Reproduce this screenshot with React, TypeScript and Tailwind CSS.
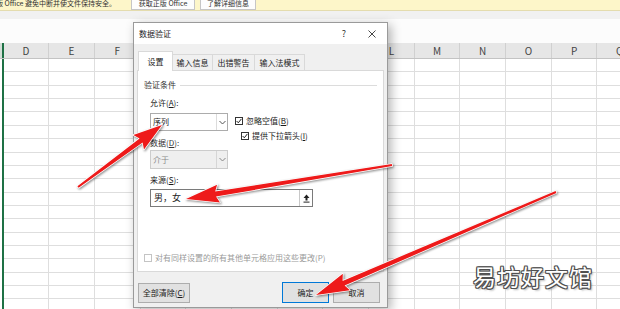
import React from "react";

const COLS = ["D", "E", "F", "G", "H", "I", "J", "K", "L", "M", "N", "O", "P", "Q"];
const ROWS = Array.from({ length: 19 }, (_, i) => i);

type Arrow = { x1: number; y1: number; x2: number; y2: number; w0: number; w1: number; hl: number; hw: number };

const ARROWS: Arrow[] = [
  { x1: 78, y1: 187, x2: 162, y2: 125, w0: 2, w1: 5, hl: 26, hw: 9 },
  { x1: 392, y1: 165, x2: 186, y2: 199, w0: 2, w1: 5, hl: 30, hw: 9 },
  { x1: 556, y1: 192, x2: 316, y2: 295, w0: 2, w1: 5, hl: 30, hw: 9 },
];

function arrowPoints(a: Arrow) {
  const dx = a.x2 - a.x1;
  const dy = a.y2 - a.y1;
  const len = Math.hypot(dx, dy);
  const ux = dx / len;
  const uy = dy / len;
  const nx = -uy;
  const ny = ux;
  const bx = a.x2 - ux * a.hl;
  const by = a.y2 - uy * a.hl;
  const pts = [
    [a.x1 + (nx * a.w0) / 2, a.y1 + (ny * a.w0) / 2],
    [bx + (nx * a.w1) / 2, by + (ny * a.w1) / 2],
    [bx - ux * 3 + nx * a.hw, by - uy * 3 + ny * a.hw],
    [a.x2, a.y2],
    [bx - ux * 3 - nx * a.hw, by - uy * 3 - ny * a.hw],
    [bx - (nx * a.w1) / 2, by - (ny * a.w1) / 2],
    [a.x1 - (nx * a.w0) / 2, a.y1 - (ny * a.w0) / 2],
  ];
  return pts.map((p) => `${p[0].toFixed(1)},${p[1].toFixed(1)}`).join(" ");
}

function Chevron({ color }: { color: string }) {
  return (
    <svg width="7" height="5" viewBox="0 0 7 5">
      <polyline points="0.5,1 3.5,4 6.5,1" fill="none" stroke={color} strokeWidth="1" />
    </svg>
  );
}

function CheckBox({ checked, disabled }: { checked?: boolean; disabled?: boolean }) {
  return (
    <div
      className={`w-[8px] h-[8px] border flex items-center justify-center bg-white ${
        disabled ? "border-[#c4c4c4]" : "border-[#333]"
      }`}
    >
      {checked && (
        <svg width="6" height="6" viewBox="0 0 6 6">
          <polyline points="0.6,3 2.3,4.8 5.4,0.9" fill="none" stroke="#222" strokeWidth="1" />
        </svg>
      )}
    </div>
  );
}

function Sheet() {
  return (
    <div className="flex flex-col">
      {/* 列标题 */}
      <div className="flex h-[16px] bg-[#e6e6e6] border-b border-[#c3c3c3]">
        <div className="w-[3.5px] shrink-0 bg-[#d4dfd8] border-r-2 border-[#1e7145]" />
        {COLS.map((c) => (
          <div
            key={c}
            className="w-[45.7px] shrink-0 border-r border-[#d0d0d0] flex items-center justify-center text-[10px] text-[#444]"
          >
            {c}
          </div>
        ))}
      </div>
      {ROWS.map((r) => (
        <div key={r} className="flex h-[13.37px]">
          <div className="w-[3.5px] shrink-0 border-r-2 border-[#1e7145]" />
          {COLS.map((c) => (
            <div key={c} className="w-[45.7px] shrink-0 border-r border-b border-[#dedede]" />
          ))}
        </div>
      ))}
    </div>
  );
}

function Dialog() {
  return (
    <div className="absolute left-[133px] top-[22px] w-[255px] h-[286px] border border-[#9a9a9a] bg-[#f0f0f0] shadow-[3px_3px_10px_rgba(0,0,0,0.3)] flex flex-col text-[8px] text-[#1a1a1a]">
      {/* 标题栏 */}
      <div className="h-[21px] bg-white flex items-center pl-[5px]">
        <span className="text-[8px]">数据验证</span>
        <div className="ml-auto flex items-center pr-[8px]">
          <span className="w-[14px] text-center text-[9px] text-[#333]">?</span>
          <div className="w-[14px] ml-[14px] flex justify-center">
            <svg width="8" height="8" viewBox="0 0 8 8">
              <path d="M0.5 0.5 L7.5 7.5 M7.5 0.5 L0.5 7.5" stroke="#333" strokeWidth="0.9" />
            </svg>
          </div>
        </div>
      </div>

      <div className="flex flex-col px-[3px] pt-[7px]">
        {/* 标签页 */}
        <div className="flex items-end h-[19px] pl-[1px]">
          <div className="h-[20px] w-[35px] -mb-px relative z-10 bg-white border border-b-0 border-[#d9d9d9] flex items-center justify-center">
            设置
          </div>
          <div className="h-[16px] w-[40px] border border-b-0 border-l-0 border-[#d9d9d9] flex items-center justify-center">
            输入信息
          </div>
          <div className="h-[16px] w-[42px] border border-b-0 border-l-0 border-[#d9d9d9] flex items-center justify-center">
            出错警告
          </div>
          <div className="h-[16px] w-[50px] border border-b-0 border-l-0 border-[#d9d9d9] flex items-center justify-center">
            输入法模式
          </div>
        </div>

        {/* 面板 */}
        <div className="h-[202px] bg-white border border-[#d9d9d9] pl-[6px] pt-[8px] flex flex-col">
          <div className="h-[12px] flex items-center">
            <span className="text-[#333]">验证条件</span>
            <div className="flex-1 h-px bg-[#dcdcdc] ml-[4px] mr-[6px]" />
          </div>
          <div className="pl-[6px] flex flex-col">
            <div className="mt-[6px] h-[11px] flex items-center">
              允许(<span className="underline">A</span>):
            </div>
            <div className="mt-[5px] flex">
              <div className="w-[78px] flex flex-col">
                <div className="h-[18px] border border-[#acacac] bg-white flex">
                  <div className="flex-1 flex items-center pl-[2px]">序列</div>
                  <div className="w-[11px] border-l border-[#dcdcdc] flex items-center justify-center">
                    <Chevron color="#555" />
                  </div>
                </div>
                <div className="mt-[6px] h-[12px] flex items-center text-[#333]">
                  数据(<span className="underline">D</span>):
                </div>
                <div className="mt-[1px] h-[19px] border border-[#cccccc] bg-[#efefef] flex text-[#8a8a8a]">
                  <div className="flex-1 flex items-center pl-[2px]">介于</div>
                  <div className="w-[11px] border-l border-[#d6d6d6] flex items-center justify-center">
                    <Chevron color="#888" />
                  </div>
                </div>
              </div>
              <div className="ml-[7px] flex flex-col">
                <div className="h-[15px] flex items-center gap-[3px]">
                  <CheckBox checked />
                  <span>
                    忽略空值(<span className="underline">B</span>)
                  </span>
                </div>
                <div className="h-[15px] flex items-center gap-[3px] pl-[6px]">
                  <CheckBox checked />
                  <span>
                    提供下拉箭头(<span className="underline">I</span>)
                  </span>
                </div>
              </div>
            </div>
            <div className="mt-[5px] h-[12px] flex items-center">
              来源(<span className="underline">S</span>):
            </div>
            <div className="mt-[3px] w-[163px] h-[18px] border border-[#7a7a7a] bg-white flex">
              <div className="flex-1 flex items-center pl-[3px] text-[9px]">男，女</div>
              <div className="w-[13px] border-l border-[#c8c8c8] flex items-center justify-center">
                <svg width="7" height="9" viewBox="0 0 7 9">
                  <path d="M3.5 0.5 L6.5 4 H4.5 V6.5 H2.5 V4 H0.5 Z" fill="#222" />
                  <rect x="0.5" y="7.6" width="6" height="1" fill="#222" />
                </svg>
              </div>
            </div>
          </div>
          <div className="mt-[44px] h-[13px] flex items-center gap-[3px] text-[#9a9a9a]">
            <CheckBox disabled />
            <span>对有同样设置的所有其他单元格应用这些更改(P)</span>
          </div>
        </div>

        {/* 按钮 */}
        <div className="mt-[10px] flex items-center pl-[1px] pr-[4px]">
          <div className="w-[52px] h-[20px] bg-[#e1e1e1] border border-[#adadad] flex items-center justify-center">
            全部清除(<span className="underline">C</span>)
          </div>
          <div className="ml-auto w-[47px] h-[21px] bg-[#e1e1e1] border border-[#0078d7] flex items-center justify-center">
            确定
          </div>
          <div className="ml-[4px] w-[47px] h-[21px] bg-[#e1e1e1] border border-[#adadad] flex items-center justify-center">
            取消
          </div>
        </div>
      </div>
    </div>
  );
}

export default function App() {
  return (
    <div
      className="relative w-[620px] h-[309px] overflow-hidden bg-white"
      style={{ fontFamily: '"Noto Sans CJK SC", "Noto Sans", sans-serif' }}
    >
      {/* 提示栏 */}
      <div className="h-[11px] bg-[#fdf6c9] border-b border-[#e4dcae] overflow-hidden">
        <div className="flex items-center h-[14px] -mt-[4px] text-[7px] text-[#333]">
          <span className="-ml-[4px]">版 Office 避免中断并使文件保持安全。</span>
          <div className="ml-[15px] w-[64px] h-[14px] bg-[#fdfdfd] border border-[#c6c6c6] flex items-center justify-center">
            获取正版 Office
          </div>
          <div className="ml-[5px] w-[56px] h-[14px] bg-[#fdfdfd] border border-[#c6c6c6] flex items-center justify-center">
            了解详细信息
          </div>
        </div>
      </div>
      <div className="h-[8px] bg-[#f1f1f1]" />
      <div className="h-[24px] bg-[#fcfcfc]" />

      <Sheet />
      <Dialog />

      {/* 箭头 */}
      <svg
        className="absolute inset-0 pointer-events-none drop-shadow-[1px_1px_1px_rgba(0,0,0,0.45)]"
        width="620"
        height="309"
        viewBox="0 0 620 309"
      >
        {ARROWS.map((a, i) => (
          <polygon
            key={i}
            points={arrowPoints(a)}
            fill="#ee1a1a"
            stroke="#ffffff"
            strokeWidth="1.5"
            strokeLinejoin="round"
            paintOrder="stroke"
          />
        ))}
      </svg>

      {/* 水印 */}
      <div className="absolute left-[473px] top-[262px] text-[23px] leading-[28px] text-white tracking-[1px] [text-shadow:1px_0_#505050,-1px_0_#505050,0_1px_#505050,0_-1px_#505050,1px_1px_#505050,-1px_-1px_#505050,1px_-1px_#505050,-1px_1px_#505050,2px_2px_2px_rgba(0,0,0,0.3)]">
        易坊好文馆
      </div>
    </div>
  );
}
